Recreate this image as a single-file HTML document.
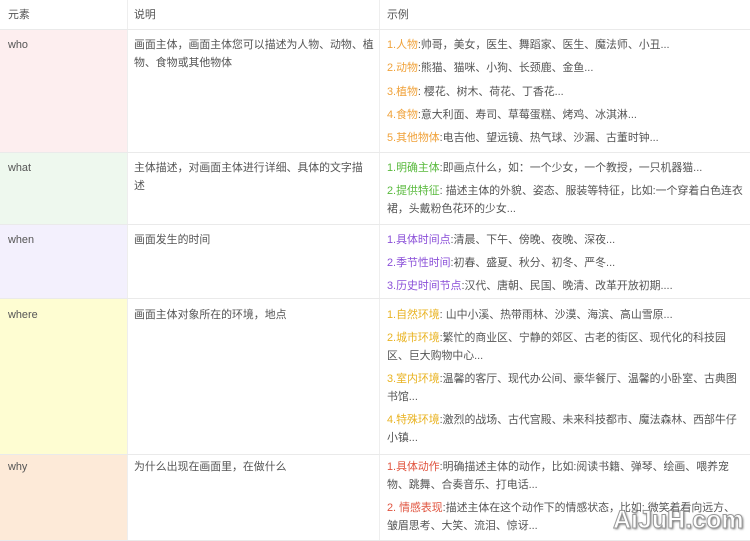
<!DOCTYPE html>
<html><head><meta charset="utf-8"><style>
*{margin:0;padding:0;box-sizing:border-box}
body{width:750px;height:541px;overflow:hidden;background:#fff;font-family:"Liberation Sans","Noto Sans CJK SC",sans-serif;font-size:10.9px;color:#555;position:relative}
.r{position:absolute;left:0;width:750px;border-bottom:1px solid #eaeaea}
.c1{position:absolute;left:0;top:0;bottom:0;width:127px}
.c2{position:absolute;left:127px;top:0;bottom:0;width:253px;border-left:1px solid #eee;border-right:1px solid #eee}
.t{position:absolute;white-space:nowrap;line-height:18px;height:18px}
.o{color:#f0a23a}.g{color:#58b93c}.p{color:#8a4fd8}.y{color:#e9b322}.rd{color:#e0533e}
</style></head><body>
<div class="r" style="top:0;height:30px"><div class="c1"></div><div class="c2"></div></div>
<div class="r" style="top:30px;height:123px"><div class="c1" style="background:#fdeeef"></div><div class="c2"></div></div>
<div class="r" style="top:153px;height:72px"><div class="c1" style="background:#eef8ee"></div><div class="c2"></div></div>
<div class="r" style="top:225px;height:74px"><div class="c1" style="background:#f3f0fd"></div><div class="c2"></div></div>
<div class="r" style="top:299px;height:156px"><div class="c1" style="background:#fefdd2"></div><div class="c2"></div></div>
<div class="r" style="top:455px;height:86px"><div class="c1" style="background:#fdead8"></div><div class="c2"></div></div>

<div class="t" style="left:8px;top:6px">元素</div>
<div class="t" style="left:134px;top:6px">说明</div>
<div class="t" style="left:387px;top:6px">示例</div>

<div class="t" style="left:8px;top:36px">who</div>
<div class="t" style="left:134px;top:36px">画面主体，画面主体您可以描述为人物、动物、植</div>
<div class="t" style="left:134px;top:54px">物、食物或其他物体</div>
<div class="t" style="left:387px;top:36px"><span class="o">1.人物</span>:帅哥，美女，医生、舞蹈家、医生、魔法师、小丑...</div>
<div class="t" style="left:387px;top:59px"><span class="o">2.动物</span>:熊猫、猫咪、小狗、长颈鹿、金鱼...</div>
<div class="t" style="left:387px;top:83px"><span class="o">3.植物</span>: 樱花、树木、荷花、丁香花...</div>
<div class="t" style="left:387px;top:106px"><span class="o">4.食物</span>:意大利面、寿司、草莓蛋糕、烤鸡、冰淇淋...</div>
<div class="t" style="left:387px;top:129px"><span class="o">5.其他物体</span>:电吉他、望远镜、热气球、沙漏、古董时钟...</div>

<div class="t" style="left:8px;top:159px">what</div>
<div class="t" style="left:134px;top:159px">主体描述，对画面主体进行详细、具体的文字描</div>
<div class="t" style="left:134px;top:177px">述</div>
<div class="t" style="left:387px;top:159px"><span class="g">1.明确主体</span>:即画点什么，如：一个少女，一个教授，一只机器猫...</div>
<div class="t" style="left:387px;top:182px"><span class="g">2.提供特征</span>: 描述主体的外貌、姿态、服装等特征，比如:一个穿着白色连衣</div>
<div class="t" style="left:387px;top:200px">裙，头戴粉色花环的少女...</div>

<div class="t" style="left:8px;top:231px">when</div>
<div class="t" style="left:134px;top:231px">画面发生的时间</div>
<div class="t" style="left:387px;top:231px"><span class="p">1.具体时间点</span>:清晨、下午、傍晚、夜晚、深夜...</div>
<div class="t" style="left:387px;top:254px"><span class="p">2.季节性时间</span>:初春、盛夏、秋分、初冬、严冬...</div>
<div class="t" style="left:387px;top:277px"><span class="p">3.历史时间节点</span>:汉代、唐朝、民国、晚清、改革开放初期....</div>

<div class="t" style="left:8px;top:306px">where</div>
<div class="t" style="left:134px;top:306px">画面主体对象所在的环境，地点</div>
<div class="t" style="left:387px;top:306px"><span class="y">1.自然环境</span>: 山中小溪、热带雨林、沙漠、海滨、高山雪原...</div>
<div class="t" style="left:387px;top:329px"><span class="y">2.城市环境</span>:繁忙的商业区、宁静的郊区、古老的街区、现代化的科技园</div>
<div class="t" style="left:387px;top:347px">区、巨大购物中心...</div>
<div class="t" style="left:387px;top:370px"><span class="y">3.室内环境</span>:温馨的客厅、现代办公间、豪华餐厅、温馨的小卧室、古典图</div>
<div class="t" style="left:387px;top:388px">书馆...</div>
<div class="t" style="left:387px;top:411px"><span class="y">4.特殊环境</span>:激烈的战场、古代宫殿、未来科技都市、魔法森林、西部牛仔</div>
<div class="t" style="left:387px;top:429px">小镇...</div>

<div class="t" style="left:8px;top:458px">why</div>
<div class="t" style="left:134px;top:458px">为什么出现在画面里，在做什么</div>
<div class="t" style="left:387px;top:458px"><span class="rd">1.具体动作</span>:明确描述主体的动作，比如:阅读书籍、弹琴、绘画、喂养宠</div>
<div class="t" style="left:387px;top:476px">物、跳舞、合奏音乐、打电话...</div>
<div class="t" style="left:387px;top:499px"><span class="rd">2. 情感表现</span>:描述主体在这个动作下的情感状态，比如: 微笑着看向远方、</div>
<div class="t" style="left:387px;top:517px">皱眉思考、大笑、流泪、惊讶...</div>

<div style="position:absolute;left:613px;top:506px;font-family:'Liberation Sans',sans-serif;font-size:25px;font-weight:bold;color:#fff;-webkit-text-stroke:1px #999;text-shadow:1px 1px 2px #666">AiJuH.com</div>
</body></html>
